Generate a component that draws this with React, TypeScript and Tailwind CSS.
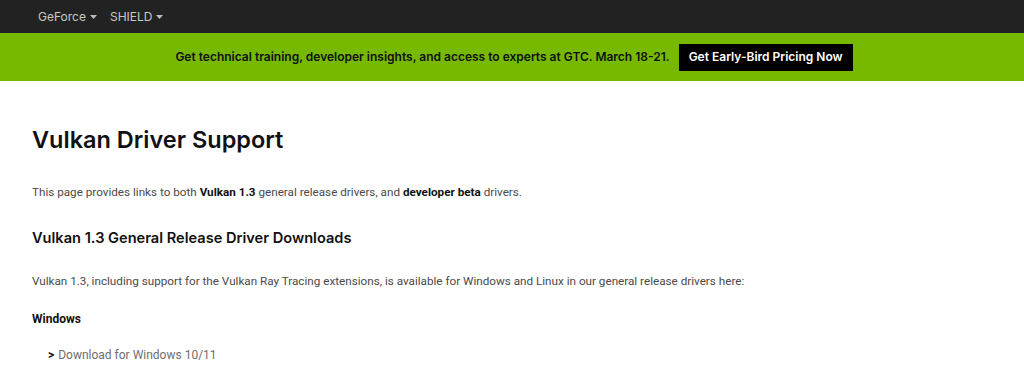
import React from "react";

const font = { fontFamily: "Inter, 'Noto Sans', sans-serif" };
const body = { fontFamily: "Roboto, 'Noto Sans', sans-serif" };

function Caret() {
  return (
    <svg width="7" height="4" viewBox="0 0 7 4" className="ml-[4px] mt-[1px]">
      <path d="M0 0 H7 L3.5 4 Z" fill="#bdbdbd" />
    </svg>
  );
}

export default function App() {
  return (
    <div style={font} className="w-[1024px] h-[368px] bg-white overflow-hidden">
      <div className="h-[33px] bg-[#222222] flex items-center pl-[38px] gap-[13px]">
        <div className="flex items-center text-[12px] text-[#c8c8c8]">GeForce<Caret /></div>
        <div className="flex items-center text-[12px] text-[#c8c8c8]">SHIELD<Caret /></div>
      </div>
      <div className="h-[48px] bg-[#76b900] flex items-center justify-center gap-[9px] pl-[4px]">
        <span className="text-[12px] font-semibold text-[#111]">
          Get technical training, developer insights, and access to experts at GTC. March 18-21.
        </span>
        <span className="bg-black text-white text-[12px] font-semibold h-[27px] px-[10px] flex items-center">
          Get Early-Bird Pricing Now
        </span>
      </div>
      <div className="pl-[32px]">
        <h1 className="text-[23.5px] font-semibold text-[#111] mt-[44px] leading-[30px]">Vulkan Driver Support</h1>
        <p style={body} className="text-[11.7px] text-[#4a4a4a] mt-[28px] leading-[18px]">
          This page provides links to both <b className="text-[#111]">Vulkan 1.3</b> general release drivers, and{" "}
          <b className="text-[#111]">developer beta</b> drivers.
        </p>
        <h2 className="text-[14.6px] font-semibold text-[#111] mt-[26px] leading-[22px]">
          Vulkan 1.3 General Release Driver Downloads
        </h2>
        <p style={body} className="text-[11.7px] text-[#4a4a4a] mt-[23px] leading-[18px]">
          Vulkan 1.3, including support for the Vulkan Ray Tracing extensions, is available for Windows and Linux in our general release drivers here:
        </p>
        <p style={body} className="text-[12px] font-bold text-[#111] mt-[20px] leading-[18px]">Windows</p>
        <div style={body} className="mt-[18px] pl-[16px] flex items-center text-[12px] leading-[18px]">
          <span className="text-[#111] font-bold mr-[4px]">&gt;</span>
          <span className="text-[#6e6e6e]">Download for Windows 10/11</span>
        </div>
      </div>
    </div>
  );
}
